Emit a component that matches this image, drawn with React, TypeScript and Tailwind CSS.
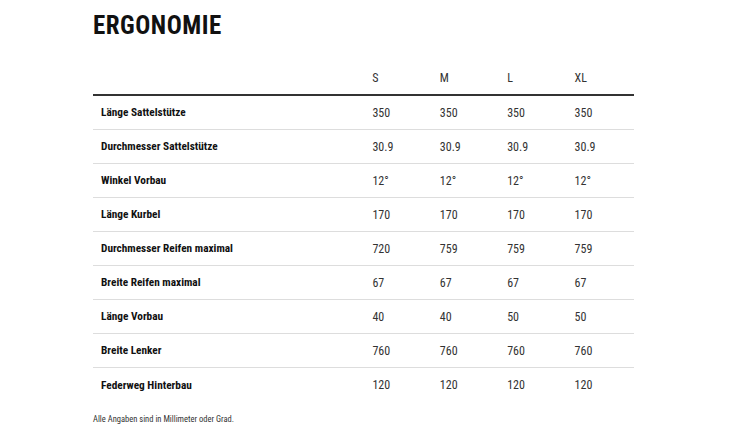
const sizes = ["S", "M", "L", "XL"];

const rows: [string, string[]][] = [
  ["Länge Sattelstütze", ["350", "350", "350", "350"]],
  ["Durchmesser Sattelstütze", ["30.9", "30.9", "30.9", "30.9"]],
  ["Winkel Vorbau", ["12°", "12°", "12°", "12°"]],
  ["Länge Kurbel", ["170", "170", "170", "170"]],
  ["Durchmesser Reifen maximal", ["720", "759", "759", "759"]],
  ["Breite Reifen maximal", ["67", "67", "67", "67"]],
  ["Länge Vorbau", ["40", "40", "50", "50"]],
  ["Breite Lenker", ["760", "760", "760", "760"]],
  ["Federweg Hinterbau", ["120", "120", "120", "120"]],
];

export default function App() {
  return (
    <div
      className="w-[730px] h-[425px] bg-white overflow-hidden pl-[93px] pt-[11px]"
      style={{ fontFamily: '"Roboto Condensed", "Liberation Sans Narrow", Roboto, sans-serif' }}
    >
      <h1 className="h-[30px] leading-[30px] text-[25px] font-bold tracking-[0.5px] text-[#111]">
        ERGONOMIE
      </h1>

      <div className="w-[541px] mt-[21px] text-[12px] leading-[18px]">
        {/* Header */}
        <div className="flex h-[34px] items-center border-b-2 border-[#333] text-[#333]">
          <div className="w-[274px]" />
          {sizes.map((s) => (
            <div key={s} className="w-[68px] pl-2">
              {s}
            </div>
          ))}
        </div>

        {/* Rows */}
        {rows.map(([label, values], i) => (
          <div
            key={label}
            className={`flex items-center h-[34px] ${
              i < rows.length - 1 ? "border-b border-[#ddd]" : ""
            }`}
          >
            <div className="w-[274px] pl-2 pt-px text-[11.3px] leading-[18px] font-bold text-[#111]">
              {label}
            </div>
            {values.map((v, j) => (
              <div key={j} className="w-[68px] pl-2 text-[#333]">
                {v}
              </div>
            ))}
          </div>
        ))}
      </div>

      <p className="mt-[11px] text-[8.5px] leading-[12px] text-[#333]">
        Alle Angaben sind in Millimeter oder Grad.
      </p>
    </div>
  );
}
